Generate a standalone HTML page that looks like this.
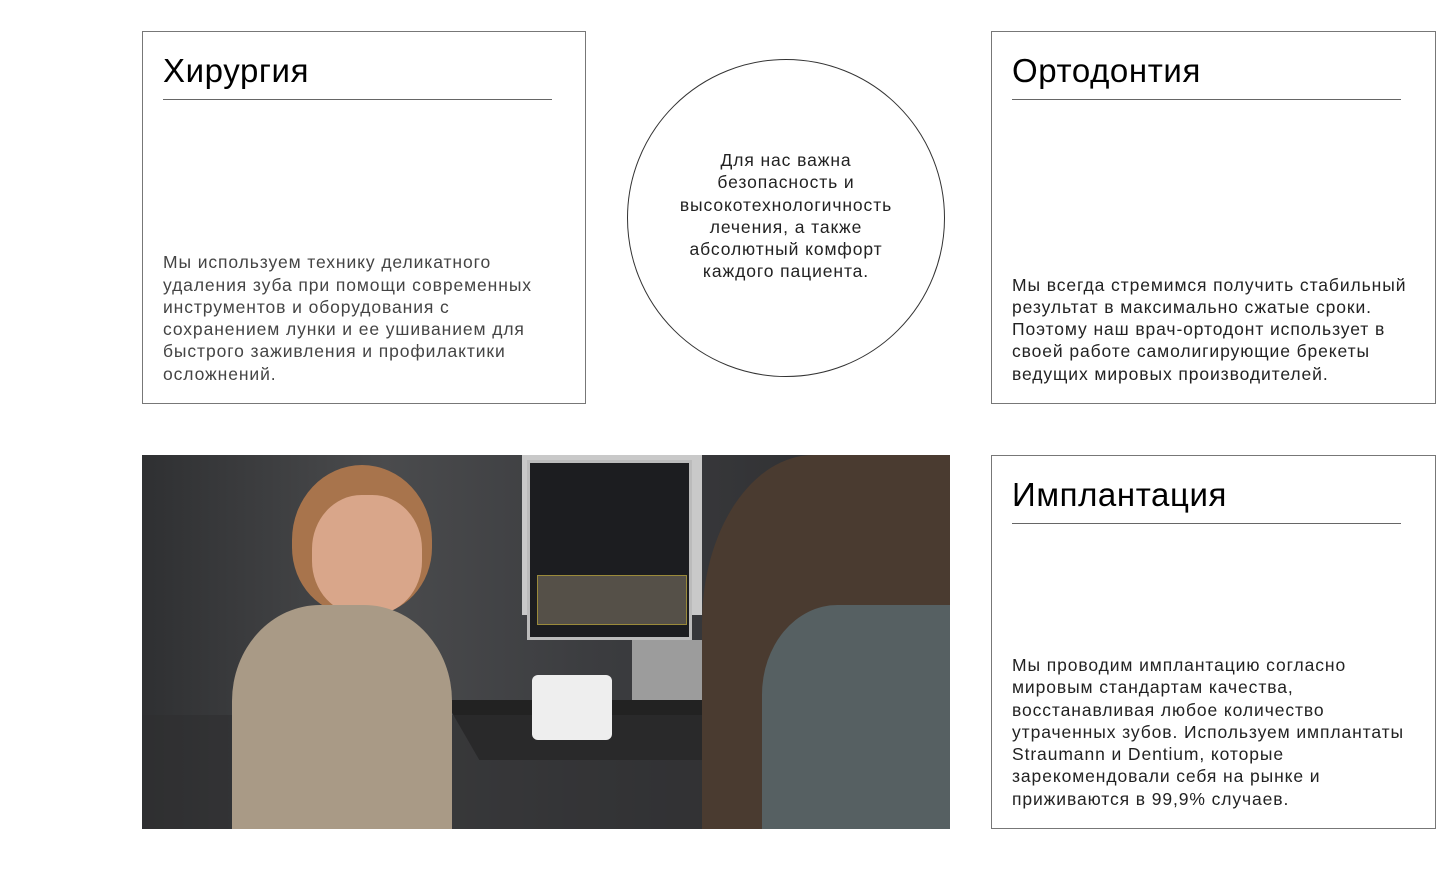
<!DOCTYPE html>
<html><head><meta charset="utf-8"><style>
*{margin:0;padding:0;box-sizing:border-box}
body{width:1456px;height:877px;background:#fff;position:relative;overflow:hidden;font-family:"Liberation Sans","DejaVu Sans",sans-serif;color:#111}
.card{position:absolute;border:1px solid #777;background:#fff}
.card h2{position:absolute;left:20px;top:20px;font-weight:400;font-size:33px;letter-spacing:0.6px;color:#000}
.card .ln{position:absolute;left:20px;width:389px;top:67px;height:1px;background:#666}
.card p{position:absolute;left:20px;bottom:18px;font-size:17.5px;letter-spacing:0.9px;line-height:22.3px;color:#444;white-space:nowrap}
.circle{position:absolute;left:627px;top:59px;width:318px;height:318px;border:1px solid #333;border-radius:50%}
.circle p{position:absolute;left:0;right:0;top:89px;text-align:center;font-size:17.5px;letter-spacing:0.9px;line-height:22.3px;color:#222}
.photo{position:absolute;left:142px;top:455px;width:808px;height:374px;overflow:hidden;background:#3a3a3c}
.photo div{position:absolute}
</style></head><body>
<div class="card" style="left:142px;top:31px;width:444px;height:373px">
<h2>Хирургия</h2><div class="ln"></div>
<p>Мы используем технику деликатного<br>удаления зуба при помощи современных<br>инструментов и оборудования с<br>сохранением лунки и ее ушиванием для<br>быстрого заживления и профилактики<br>осложнений.</p>
</div>
<div class="circle"><p>Для нас важна<br>безопасность и<br>высокотехнологичность<br>лечения, а также<br>абсолютный комфорт<br>каждого пациента.</p></div>
<div class="card" style="left:991px;top:31px;width:445px;height:373px">
<h2>Ортодонтия</h2><div class="ln"></div>
<p style="color:#222">Мы всегда стремимся получить стабильный<br>результат в максимально сжатые сроки.<br>Поэтому наш врач-ортодонт использует в<br>своей работе самолигирующие брекеты<br>ведущих мировых производителей.</p>
</div>
<div class="card" style="left:991px;top:455px;width:445px;height:374px">
<h2>Имплантация</h2><div class="ln"></div>
<p style="color:#222">Мы проводим имплантацию согласно<br>мировым стандартам качества,<br>восстанавливая любое количество<br>утраченных зубов. Используем имплантаты<br>Straumann и Dentium, которые<br>зарекомендовали себя на рынке и<br>приживаются в 99,9% случаев.</p>
</div>
<div class="photo">
<div style="left:0;top:0;width:808px;height:374px;background:linear-gradient(90deg,#2f3032 0%,#4a4b4d 30%,#3c3d40 55%,#2a2a2c 100%)"></div>
<div style="left:380px;top:0;width:180px;height:160px;background:#c9c9c9"></div>
<div style="left:385px;top:5px;width:165px;height:180px;background:#1c1d20;border:3px solid #bbb"></div>
<div style="left:395px;top:120px;width:150px;height:50px;background:#555048;border:1px solid #9a8a3a"></div>
<div style="left:490px;top:185px;width:70px;height:60px;background:#9c9c9c"></div>
<div style="left:320px;top:245px;width:300px;height:60px;background:#222;transform:skewX(30deg)"></div>
<div style="left:0;top:260px;width:808px;height:114px;background:#2e2e30;opacity:.6"></div>
<div style="left:150px;top:10px;width:140px;height:150px;border-radius:50% 50% 45% 45%;background:#a8744c"></div>
<div style="left:170px;top:40px;width:110px;height:120px;border-radius:45%;background:#d9a68a"></div>
<div style="left:90px;top:150px;width:220px;height:240px;border-radius:40% 40% 0 0;background:#a99a86"></div>
<div style="left:390px;top:220px;width:80px;height:65px;background:#eee;border-radius:6px"></div>
<div style="left:560px;top:0;width:248px;height:374px;background:#4a3b30;border-radius:45% 0 0 0"></div>
<div style="left:620px;top:150px;width:188px;height:224px;background:#566062;border-radius:40% 0 0 0"></div>
</div>
</body></html>
